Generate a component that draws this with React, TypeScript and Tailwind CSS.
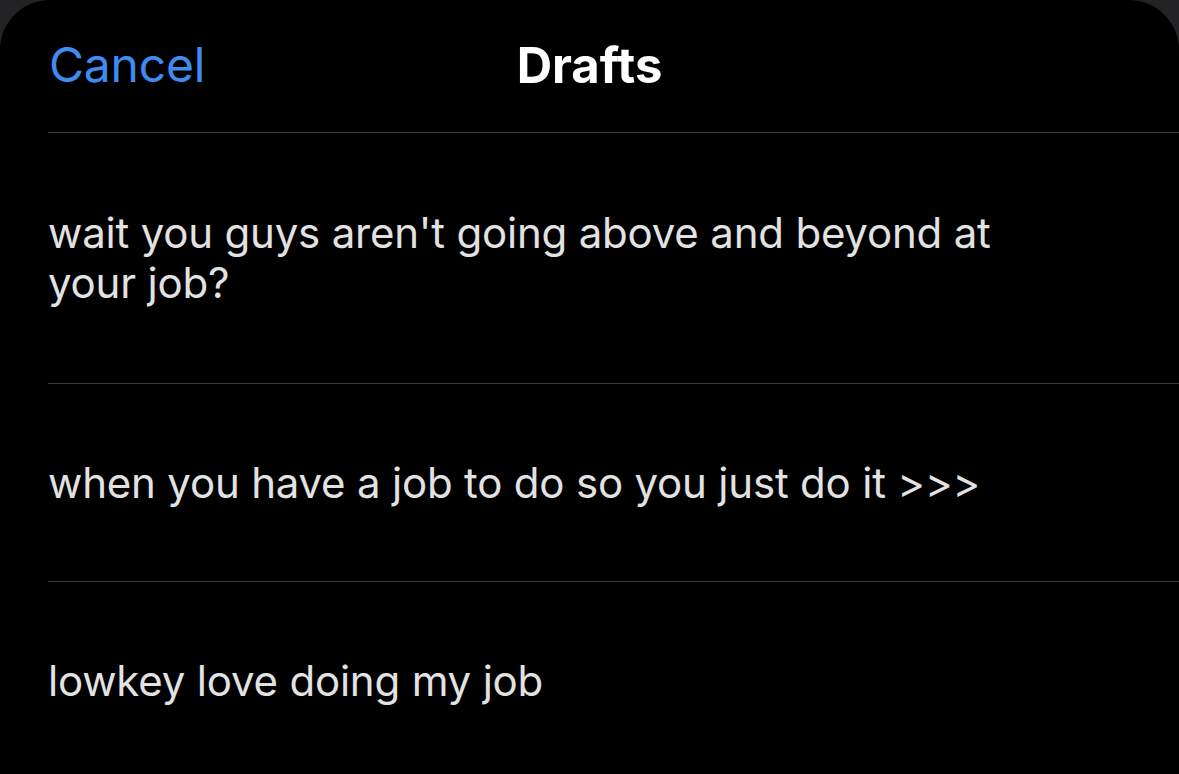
import React from "react";

const drafts = [
  ["wait you guys aren't going above and beyond at", "your job?"],
  ["when you have a job to do so you just do it >>>"],
  ["lowkey love doing my job"],
];

export default function App() {
  return (
    <div className="w-[1179px] h-[774px] bg-[#232325] overflow-hidden" style={{ fontFamily: "Inter, 'Noto Sans', sans-serif" }}>
      <div className="h-full bg-black rounded-t-[50px] flex flex-col">
        <div className="relative h-[132px] flex items-center shrink-0">
          <span className="pl-[49px] text-[48px] text-[#3e8cf0] leading-none tracking-[-0.2px] pb-[2px]">Cancel</span>
          <span className="absolute left-0 right-0 text-center text-[49px] font-bold text-white leading-none tracking-[0px] pb-[2px]">Drafts</span>
        </div>
        <div className="ml-[48px] flex flex-col">
          {drafts.map((lines, i) => (
            <div key={i} className={`border-t border-[#3a3a3c] ${i === 0 ? "pt-[75px] pb-[75px]" : "pt-[74px] pb-[73px]"} text-[42px] leading-[50px] text-[#e2e2e2] tracking-[-0.2px]`}>
              {lines.map((l, j) => (
                <div key={j}>{l}</div>
              ))}
            </div>
          ))}
        </div>
      </div>
    </div>
  );
}
